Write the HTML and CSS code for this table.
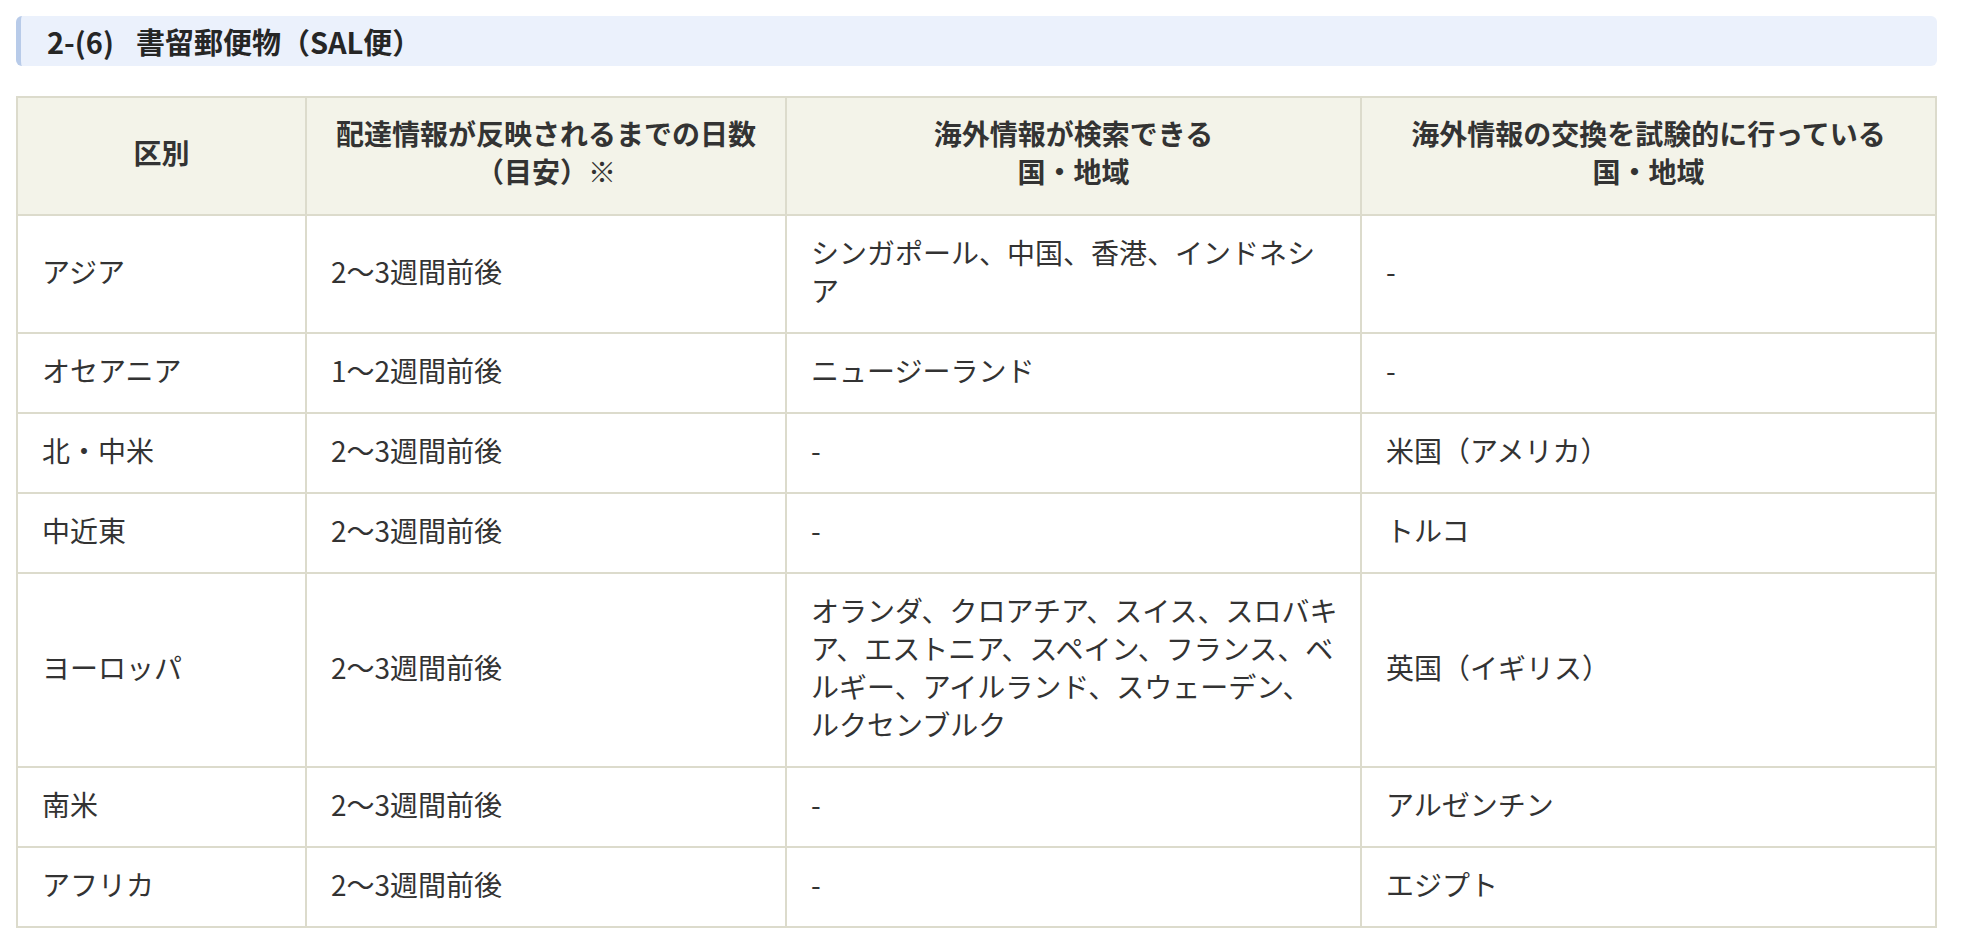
FILE: index.html
```html
<!DOCTYPE html>
<html lang="ja">
<head>
<meta charset="utf-8">
<title>2-(6) 書留郵便物（SAL便）</title>
<link rel="stylesheet" href="styles.css">
</head>
<body>
<div class="page">
  <h2 class="section-title"><span class="num">2-(6)</span>書留郵便物（SAL便）</h2>
  <table class="info-table">
    <colgroup>
      <col class="c1"><col class="c2"><col class="c3"><col class="c4">
    </colgroup>
    <thead>
      <tr>
        <th>区別</th>
        <th>配達情報が反映されるまでの日数<br>（目安）※</th>
        <th>海外情報が検索できる<br>国・地域</th>
        <th>海外情報の交換を試験的に行っている<br>国・地域</th>
      </tr>
    </thead>
    <tbody>
      <tr><td>アジア</td><td>2〜3週間前後</td><td>シンガポール、中国、香港、インドネシ<br>ア</td><td>-</td></tr>
      <tr><td>オセアニア</td><td>1〜2週間前後</td><td>ニュージーランド</td><td>-</td></tr>
      <tr><td>北・中米</td><td>2〜3週間前後</td><td>-</td><td>米国（アメリカ）</td></tr>
      <tr><td>中近東</td><td>2〜3週間前後</td><td>-</td><td>トルコ</td></tr>
      <tr><td>ヨーロッパ</td><td>2〜3週間前後</td><td>オランダ、クロアチア、スイス、スロバキ<br>ア、エストニア、スペイン、フランス、ベ<br>ルギー、アイルランド、スウェーデン、<br>ルクセンブルク</td><td>英国（イギリス）</td></tr>
      <tr><td>南米</td><td>2〜3週間前後</td><td>-</td><td>アルゼンチン</td></tr>
      <tr><td>アフリカ</td><td>2〜3週間前後</td><td>-</td><td>エジプト</td></tr>
    </tbody>
  </table>
</div>
</body>
</html>
```
FILE: styles.css
```css
html, body {
  margin: 0;
  padding: 0;
  background: #ffffff;
}
body {
  font-family: "Noto Sans CJK JP", "Noto Sans", sans-serif;
  color: #333333;
}
.page {
  padding: 16px 25px 0 16px;
}
.section-title {
  margin: 0 0 30px 0;
  height: 50px;
  box-sizing: border-box;
  display: flex;
  align-items: center;
  padding-left: 26px;
  background: #ebf1fc;
  border-left: 5px solid #b8cbe9;
  border-radius: 6px;
  font-size: 29px;
  font-weight: 700;
  color: #262626;
  line-height: 1;
}
.section-title .num {
  margin-right: 22px;
}
.info-table {
  width: 100%;
  border-collapse: collapse;
  border: 2px solid #dcdbcc;
  font-size: 28px;
  line-height: 38px;
  table-layout: fixed;
}
.info-table col.c1 { width: 289px; }
.info-table col.c2 { width: 480px; }
.info-table col.c3 { width: 575px; }
.info-table col.c4 { width: auto; }
.info-table th,
.info-table td {
  border: 2px solid #dcdbcc;
  vertical-align: middle;
}
.info-table th {
  padding: 16px 24px 24px;
  background: #f3f3e9;
  font-weight: 700;
  text-align: center;
  color: #333333;
}
.info-table td {
  padding: 17px 10px 23px 24px;
  text-align: left;
  font-weight: 400;
  white-space: nowrap;
}
```
